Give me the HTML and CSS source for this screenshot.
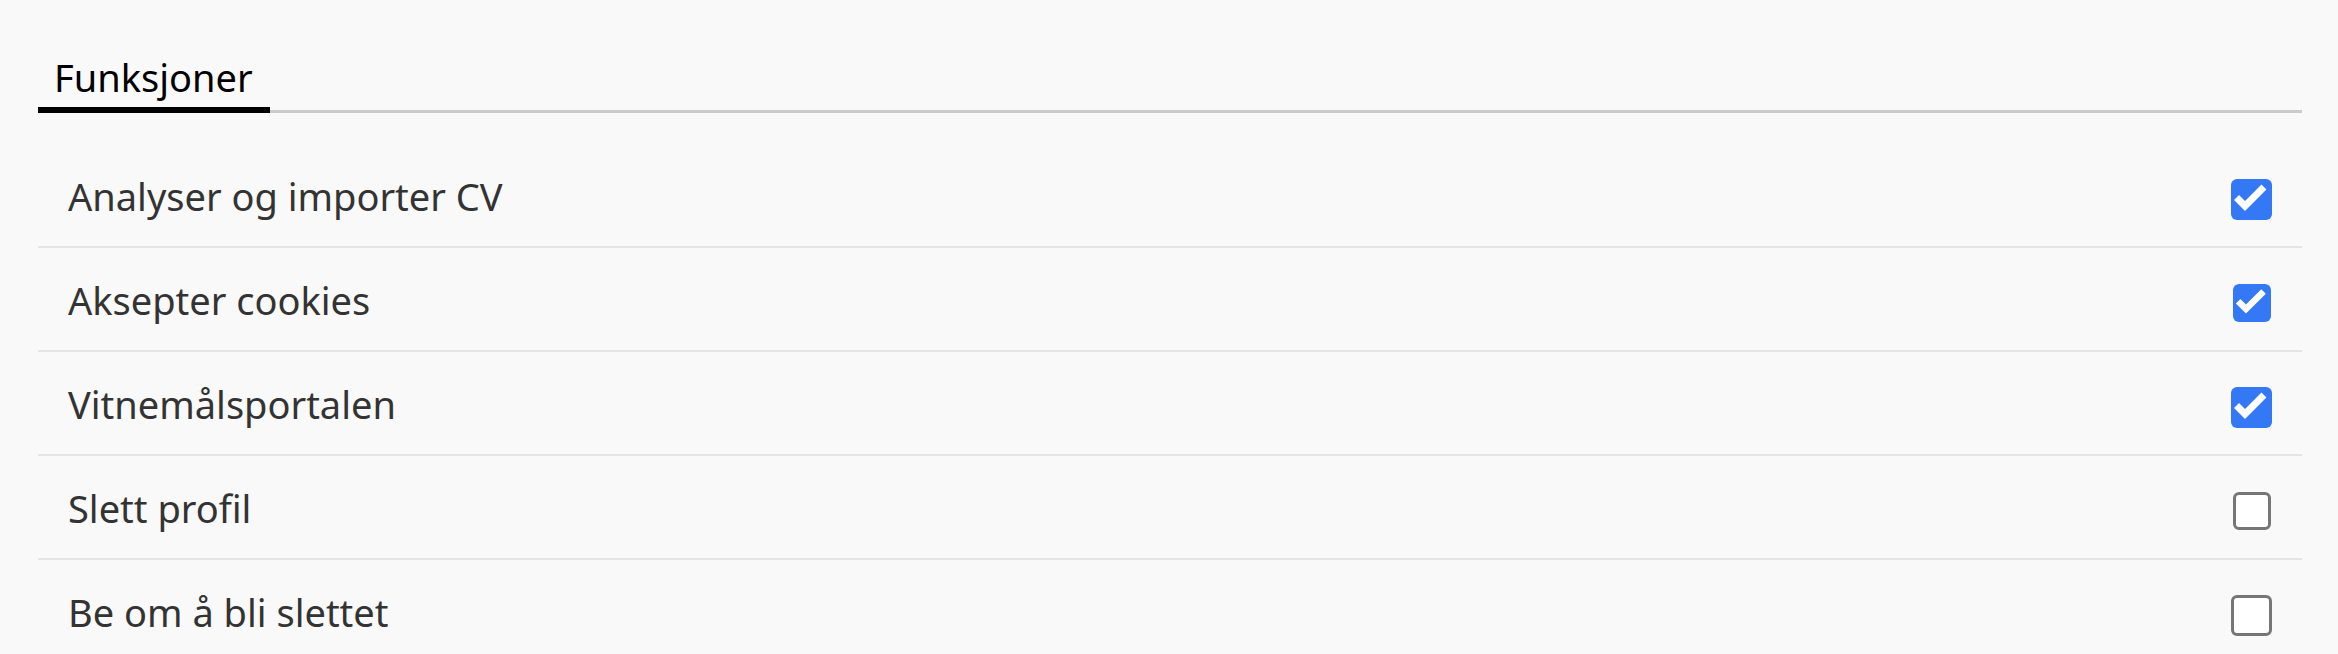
FILE: index.html
```html
<!DOCTYPE html>
<html lang="no">
<head>
<meta charset="utf-8">
<title>Funksjoner</title>
<link rel="stylesheet" href="styles.css">
</head>
<body>
<div class="panel">
  <div class="tabs">
    <div class="tab active">Funksjoner</div>
  </div>
  <ul class="list">
    <li class="row">
      <span class="label">Analyser og importer CV</span>
      <span class="box checked large"><svg viewBox="0 0 41 41"><path d="M8 21 L14 27 L30.5 10.5" /></svg></span>
    </li>
    <li class="row">
      <span class="label">Aksepter cookies</span>
      <span class="box checked"><svg viewBox="0 0 41 41"><path d="M8 21 L14 27 L30.5 10.5" /></svg></span>
    </li>
    <li class="row">
      <span class="label">Vitnemålsportalen</span>
      <span class="box checked large"><svg viewBox="0 0 41 41"><path d="M8 21 L14 27 L30.5 10.5" /></svg></span>
    </li>
    <li class="row">
      <span class="label">Slett profil</span>
      <span class="box"></span>
    </li>
    <li class="row">
      <span class="label">Be om å bli slettet</span>
      <span class="box large"></span>
    </li>
  </ul>
</div>
</body>
</html>
```

FILE: styles.css
```css
html, body {
  margin: 0;
  padding: 0;
  background: #f9f9f9;
}
body {
  font-family: "Noto Sans", "Open Sans", sans-serif;
  overflow: hidden;
  height: 654px;
}
.panel {
  padding: 0 36px 0 38px;
}
.tabs {
  display: flex;
  padding-top: 51px;
  border-bottom: 3px solid #cbcbcb;
}
.tab {
  box-sizing: border-box;
  font-size: 38px;
  line-height: 52px;
  color: #000;
  width: 232px;
  padding: 0 0 4px 16px;
  border-bottom: 6px solid #000;
  margin-bottom: -3px;
}
.list {
  list-style: none;
  margin: 31px 0 0 0;
  padding: 0;
}
.row {
  display: flex;
  align-items: center;
  justify-content: space-between;
  height: 102px;
  padding: 0 30px 0 30px;
  border-bottom: 2px solid #e5e5e5;
}
.label {
  font-size: 38px;
  color: #333;
  margin-top: 2px;
}
.box {
  box-sizing: border-box;
  width: 38px;
  height: 38px;
  margin-top: 8px;
  border: 3px solid #767676;
  border-radius: 6px;
  background: #fff;
  display: flex;
  align-items: center;
  justify-content: center;
  margin-right: 1px;
}
.box.large {
  width: 41px;
  height: 41px;
  margin-right: 0;
}
.box.checked {
  background: #3478f6;
  border: none;
}
.box svg {
  width: 100%;
  height: 100%;
  display: block;
}
.box svg path {
  fill: none;
  stroke: #fff;
  stroke-width: 7;
  stroke-linecap: square;
  stroke-linejoin: miter;
}
```
